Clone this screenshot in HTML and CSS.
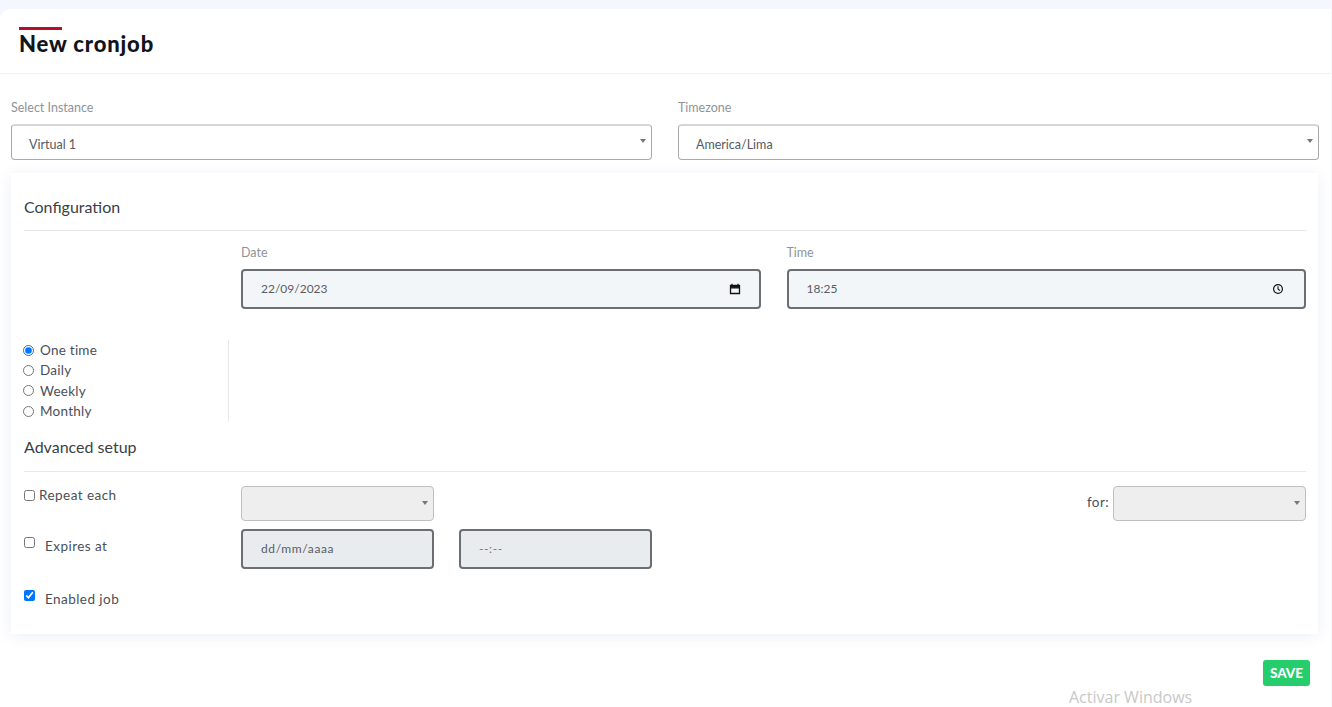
FILE: index.html
```html
<!DOCTYPE html>
<html lang="en">
<head>
<meta charset="utf-8">
<title>New cronjob</title>
<link rel="stylesheet" href="styles.css">
</head>
<body>
<div class="page">
  <header class="head">
    <div class="title-wrap">
      <span class="accent"></span>
      <h1 class="title">New cronjob</h1>
    </div>
  </header>
  <div class="tops">
    <div class="top-field">
      <label class="lbl">Select Instance</label>
      <div class="select top-select"><span>Virtual 1</span><i class="caret"></i></div>
    </div>
    <div class="top-field">
      <label class="lbl">Timezone</label>
      <div class="select top-select"><span>America/Lima</span><i class="caret"></i></div>
    </div>
  </div>
  <section class="card">
    <h2 class="sec sec-config">Configuration</h2>
    <div class="dt-row">
      <div class="dt-field">
        <label class="lbl">Date</label>
        <div class="input dark"><span>22/09/2023</span>
          <svg class="ico" viewBox="0 0 12 12" width="12" height="12"><path d="M1.5 2.5h9v8h-9z M1.5 4.8h9" fill="none" stroke="#111" stroke-width="1.3"/><path d="M3 .8v2 M9 .8v2" stroke="#111" stroke-width="1.2"/><rect x="1.5" y="2.5" width="9" height="2.2" fill="#111"/></svg>
        </div>
      </div>
      <div class="dt-field">
        <label class="lbl">Time</label>
        <div class="input dark"><span>18:25</span>
          <svg class="ico ico-time" viewBox="0 0 12 12" width="12" height="12"><circle cx="6" cy="6" r="4.4" fill="none" stroke="#111" stroke-width="1.2"/><path d="M6 3.2V6l2 1.7" fill="none" stroke="#111" stroke-width="1.1"/></svg>
        </div>
      </div>
    </div>
    <div class="freq-row">
      <div class="freq">
        <label class="radio"><input type="radio" name="f" checked>One time</label>
        <label class="radio"><input type="radio" name="f">Daily</label>
        <label class="radio"><input type="radio" name="f">Weekly</label>
        <label class="radio"><input type="radio" name="f">Monthly</label>
      </div>
    </div>
    <h2 class="sec sec-adv">Advanced setup</h2>
    <div class="adv-row adv-repeat">
      <label class="check check-tight"><input type="checkbox">Repeat each</label>
      <div class="select off small"><i class="caret"></i></div>
      <div class="for"><span class="for-lbl">for:</span><div class="select off small"><i class="caret"></i></div></div>
    </div>
    <div class="adv-row adv-expire">
      <label class="check"><input type="checkbox">Expires at</label>
      <div class="input dark off-input small"><span>dd/mm/aaaa</span></div>
      <div class="input dark off-input small time-off"><span>--:--</span></div>
    </div>
    <div class="adv-row adv-enabled">
      <label class="check"><input type="checkbox" checked>Enabled job</label>
    </div>
  </section>
  <div class="actions"><button class="save" type="button">SAVE</button></div>
</div>
<div class="watermark">Activar Windows</div>
</body>
</html>
```

FILE: styles.css
```css
* { box-sizing: border-box; }
html, body { margin: 0; height: 100%; }
body {
  background: #f4f7fd;
  font-family: "Lato", "Noto Sans", sans-serif;
  color: #4a4f57;
  overflow: hidden;
  position: relative;
}
.page {
  margin-top: 9px;
  height: 698px;
  margin-right: 1px;
  background: #fff;
  border-radius: 11px 0 0 0;
}
.head {
  height: 65px;
  padding: 18px 0 0 19px;
  border-bottom: 1px solid #eef0f3;
}
.title-wrap { display: inline-block; }
.accent { display: block; width: 43px; height: 3px; background: #b5102a; }
.title {
  margin: 0;
  font-size: 22px;
  line-height: 27px;
  font-weight: 900;
  color: #111418;
  letter-spacing: .85px;
}
.tops {
  display: flex;
  gap: 26px;
  padding: 26px 12px 0 11px;
}
.top-field { flex: 1; }
.lbl {
  display: block;
  font-size: 12.5px;
  line-height: 16px;
  color: #8f9399;
}
.top-field .lbl { margin-bottom: 8px; }
.select {
  display: flex;
  align-items: center;
  justify-content: space-between;
  border: 1px solid #a9a9a9;
  border-top: 2px solid #d6d6d6;
  border-radius: 4px;
  background: #fff;
  font-size: 12.5px;
  color: #555a61;
}
.top-select { height: 36px; padding: 4px 5px 0 17px; }
.caret {
  display: block;
  width: 0; height: 0;
  border-left: 3.5px solid transparent;
  border-right: 3.5px solid transparent;
  border-top: 4px solid #777;
  margin-left: auto;
  margin-top: -1px;
}
.top-select .caret { margin-top: -7px; }
.card {
  margin: 13px 13px 0 11px;
  height: 461px;
  padding: 0 12px 0 13px;
  background: #fff;
  box-shadow: 0 2px 14px rgba(60, 80, 140, .09);
}
.sec {
  margin: 0;
  font-size: 16px;
  font-weight: 400;
  line-height: 20px;
  color: #3a3f46;
  border-bottom: 1px solid #e6e8eb;
}
.sec-config { padding: 24px 0 14px; height: 58px; }
.dt-row {
  display: flex;
  gap: 26px;
  padding: 14px 0 0 217px;
}
.dt-field { flex: 1; }
.dt-field .lbl { margin-bottom: 8px; }
.input {
  display: flex;
  align-items: center;
  justify-content: space-between;
  height: 40px;
  padding: 0 18px 2px;
  border: 2px solid #6b6f73;
  border-radius: 4px;
  background: #f3f6f9;
  font-size: 12px;
  color: #585d63;
}
.ico { display: block; margin-right: 0; margin-top: 2px; }
.ico-time { margin-right: 2px; }
.freq-row { padding-top: 31px; }
.freq {
  width: 205px;
  height: 82px;
  border-right: 1px solid #e6e8eb;
}
.radio {
  display: flex;
  align-items: center;
  height: 20.3px;
  font-size: 13.5px;
  letter-spacing: .25px;
  color: #4a4f57;
}
.radio input { margin: 0 6px 0 -1px; width: 11px; height: 11px; }
.sec-adv { padding: 15px 0 14px; height: 50px; }
.adv-row { display: flex; align-items: flex-start; }
.check {
  display: flex;
  align-items: center;
  width: 217px;
  flex: none;
  font-size: 13.5px;
  letter-spacing: .45px;
  color: #4a4f57;
}
.check input { margin: 0 10px 0 0; width: 11px; height: 11px; }
.check-tight input { margin-right: 4px; }
.small { width: 193px; }
.off { background: #eee; border: 1px solid #bfbfbf; height: 35px; padding: 0 5px; border-radius: 4px; }
.off-input { background: #e9ecef; letter-spacing: .6px; }
.time-off { margin-left: 25px; color: #777; }
.adv-repeat { padding-top: 14px; height: 57px; }
.adv-repeat .check { padding-top: 1px; }
.for { margin-left: auto; display: flex; align-items: center; }
.for-lbl { font-size: 13.5px; letter-spacing: .4px; margin: -3px 4px 0 0; color: #4a4f57; }
.adv-expire { height: 60px; }
.adv-expire .check { padding-top: 9px; }
.adv-expire .check input,
.adv-enabled .check input { position: relative; top: -4px; }
.adv-enabled .check { padding-top: 2px; }
.actions { display: flex; justify-content: flex-end; padding: 26px 21px 0 0; }
.save {
  width: 47px;
  height: 26px;
  padding: 0;
  border: 0;
  border-radius: 3px;
  background: #25cd6d;
  color: #fff;
  font-family: inherit;
  font-size: 13.5px;
  font-weight: 900;
}
.watermark {
  position: absolute;
  left: 1069px;
  top: 686px;
  font-family: "Open Sans", sans-serif;
  font-size: 16px;
  line-height: 22px;
  color: #c8c8c8;
}
```
